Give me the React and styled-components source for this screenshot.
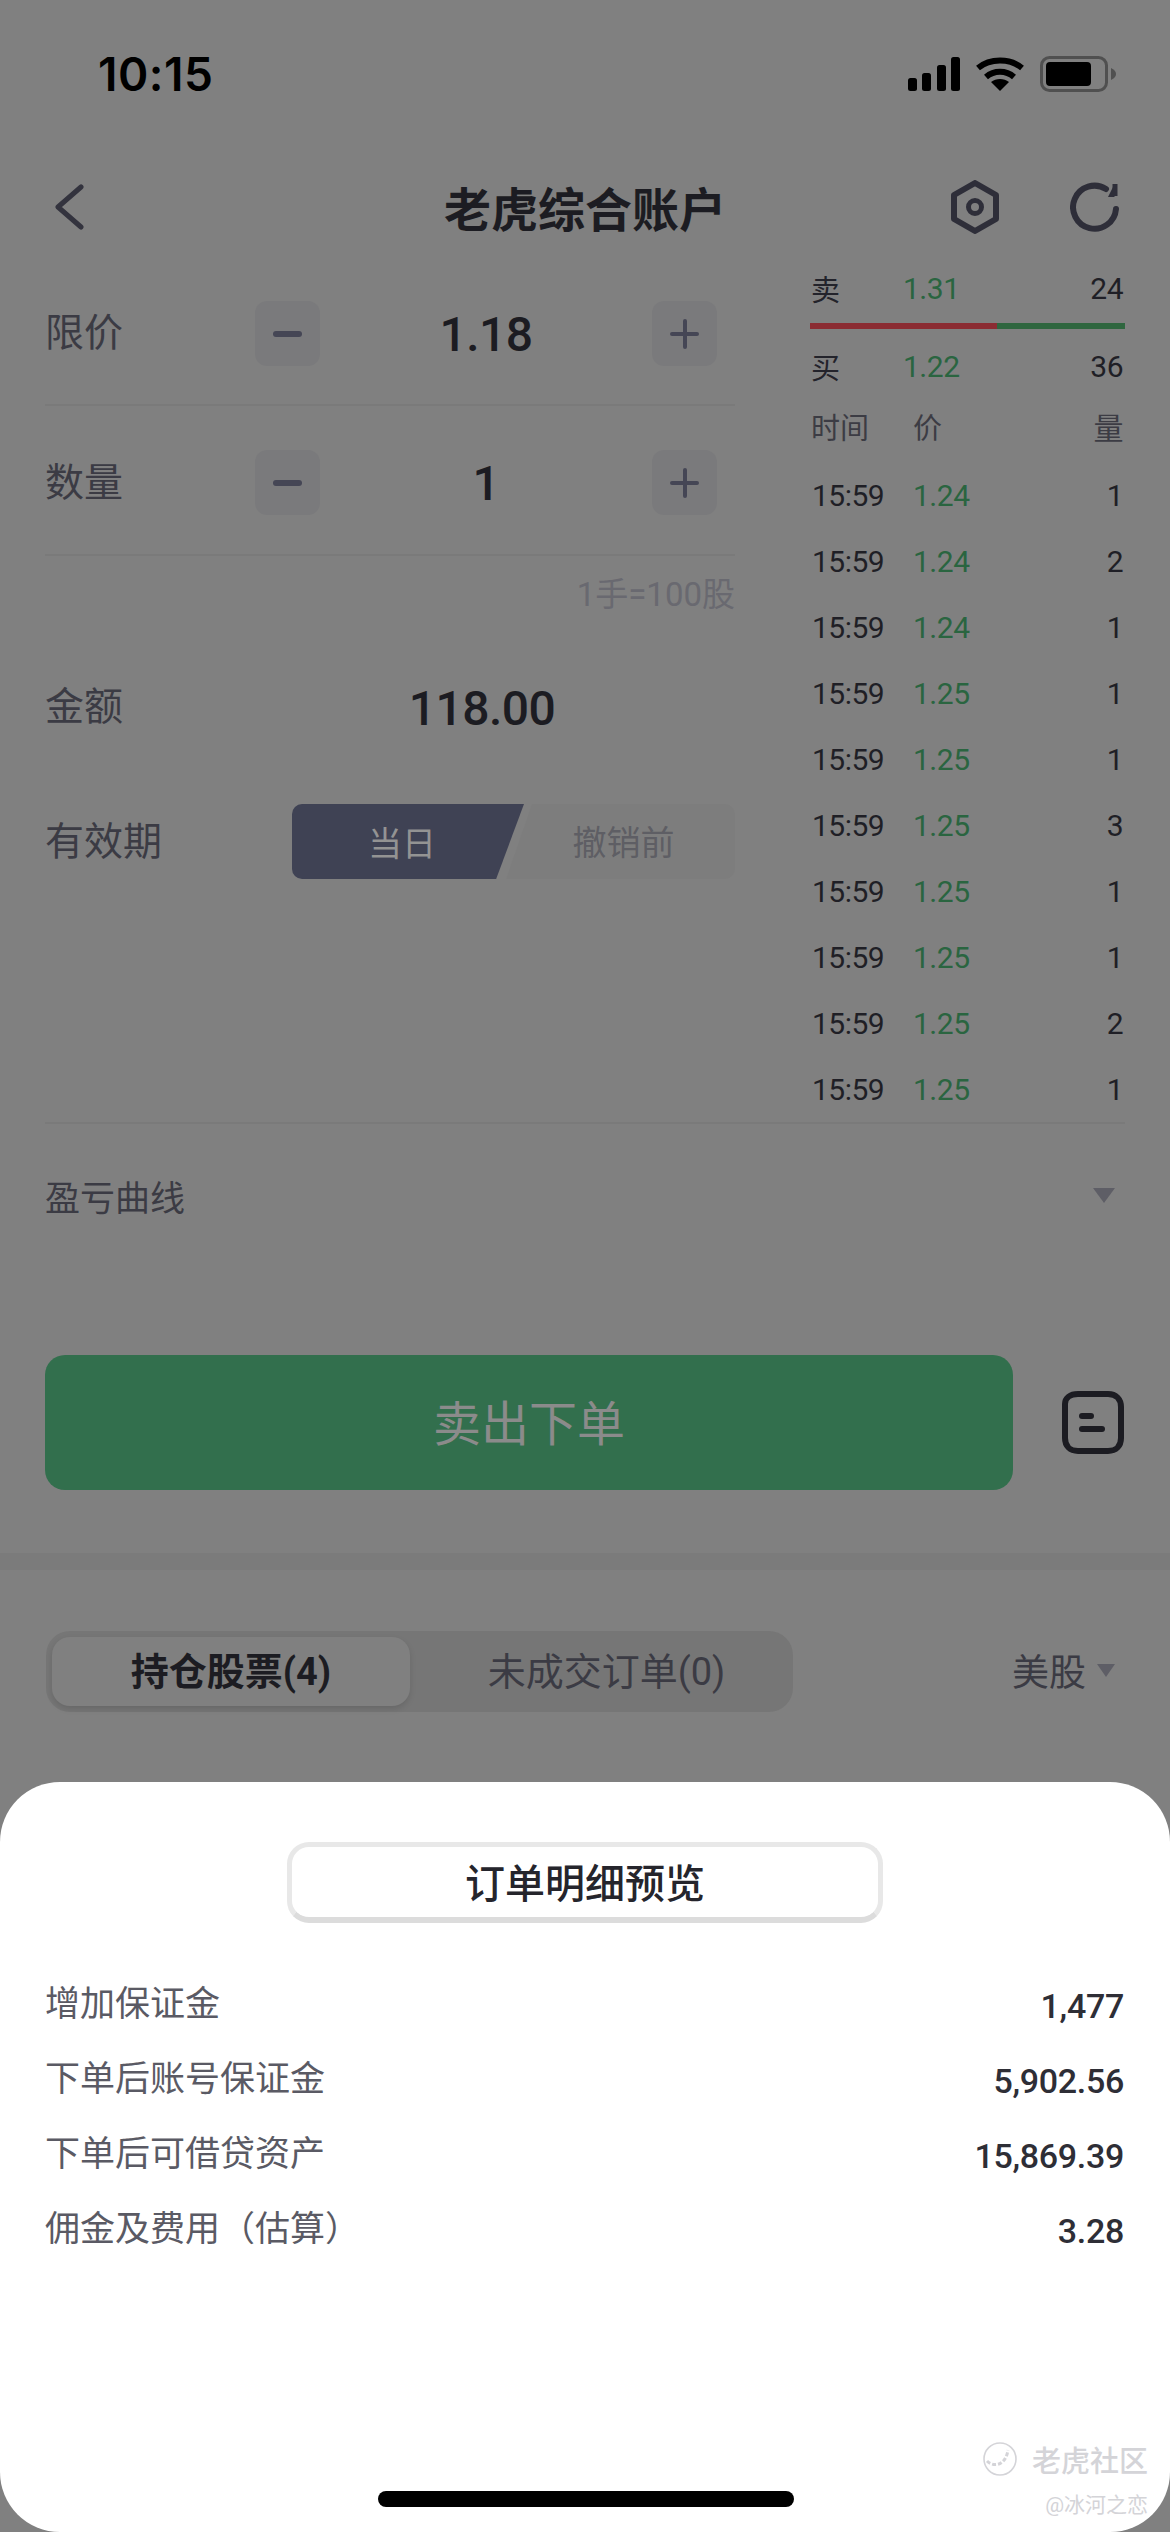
import React from 'react';
import styled, { createGlobalStyle } from 'styled-components';

const trades = [
  ['15:59', '1.24', 1],
  ['15:59', '1.24', 2],
  ['15:59', '1.24', 1],
  ['15:59', '1.25', 1],
  ['15:59', '1.25', 1],
  ['15:59', '1.25', 3],
  ['15:59', '1.25', 1],
  ['15:59', '1.25', 1],
  ['15:59', '1.25', 2],
  ['15:59', '1.25', 1],
];

const details = [
  ['增加保证金', '1,477'],
  ['下单后账号保证金', '5,902.56'],
  ['下单后可借贷资产', '15,869.39'],
  ['佣金及费用（估算）', '3.28'],
];

const SignalIcon = () => (
  <svg width="52" height="34" viewBox="0 0 52 34" fill="#000">
    <rect x="0" y="21" width="9" height="13" rx="2.5" />
    <rect x="14" y="16" width="9" height="18" rx="2.5" />
    <rect x="29" y="8" width="9" height="26" rx="2.5" />
    <rect x="43" y="0" width="9" height="34" rx="2.5" />
  </svg>
);

const WifiIcon = () => (
  <svg width="48" height="34" viewBox="0 0 48 34" fill="none" stroke="#000" strokeWidth="6">
    <path d="M2 11 C14 1 34 1 46 11" />
    <path d="M10 20 C18 13 30 13 38 20" />
    <path d="M24 34 L15 25 C20 21 28 21 33 25 Z" fill="#000" stroke="none" />
  </svg>
);

const BatteryIcon = () => (
  <svg width="76" height="36" viewBox="0 0 76 36">
    <rect x="1.5" y="1.5" width="65" height="33" rx="8" fill="none" stroke="#505050" strokeWidth="3" />
    <rect x="6" y="6" width="45" height="24" rx="4" fill="#000" />
    <path d="M71 12 C75 14 76 16 76 18 C76 20 75 22 71 24 Z" fill="#505050" />
  </svg>
);

const BackIcon = () => (
  <svg width="30" height="46" viewBox="0 0 30 46" fill="none" stroke="#33333e" strokeWidth="5" strokeLinecap="round" strokeLinejoin="round">
    <path d="M27 3 L4 23 L27 43" />
  </svg>
);

const HexIcon = () => (
  <svg width="50" height="54" viewBox="0 0 50 54" fill="none" stroke="#2e2e39" strokeWidth="6" strokeLinejoin="round">
    <path d="M25 3 L46 15 V39 L25 51 L4 39 V15 Z" />
    <circle cx="25" cy="27" r="6.5" strokeWidth="5" />
  </svg>
);

const RefreshIcon = () => (
  <svg width="50" height="50" viewBox="0 0 50 50" fill="none" stroke="#2e2e39" strokeWidth="6" strokeLinecap="round">
    <path d="M46 27 A21.5 21.5 0 1 1 36 7" />
    <path d="M44.5 2 V15 H38 Z" fill="#2e2e39" stroke="none" />
    <path d="M45 2 V14" strokeLinecap="butt" strokeWidth="5" />
  </svg>
);

const ChatIcon = () => (
  <svg width="62" height="64" viewBox="0 0 62 64" fill="none" stroke="#1c1c22" strokeWidth="6" strokeLinecap="round">
    <path d="M16 3 H46 C54 3 59 8 59 16 V47 C59 55 54 60 46 60 H16 C8 60 3 55 3 47 V13 C3 7 8 3 16 3 Z" />
    <path d="M20 25 H29" />
    <path d="M20 38 H40" />
  </svg>
);

const LogoMark = () => (
  <svg width="36" height="36" viewBox="0 0 36 36" fill="none" stroke="#d4d4d8" strokeWidth="1.6">
    <circle cx="18" cy="18" r="16" />
    <path d="M5 20 C12 27 24 24 26 9" strokeWidth="3" strokeDasharray="4 2" />
  </svg>
);

const App = () => {
  return (
    <Page>
      <GlobalStyle />
      <StatusBar>
        <Clock>10:15</Clock>
        <StatusIcons>
          <SignalIcon />
          <WifiIcon />
          <BatteryIcon />
        </StatusIcons>
      </StatusBar>

      <NavBar>
        <BackIcon />
        <NavTitle>老虎综合账户</NavTitle>
        <NavActions>
          <HexIcon />
          <RefreshIcon />
        </NavActions>
      </NavBar>

      <Body>
        <FormColumn>
          <FieldRow $height={140} $bottomPad={4} $line>
            <FieldLabel>限价</FieldLabel>
            <Stepper>
              <MinusButton />
              <FieldValue>1.18</FieldValue>
              <PlusButton />
            </Stepper>
          </FieldRow>
          <FieldRow $height={150} $topPad={5} $line>
            <FieldLabel>数量</FieldLabel>
            <Stepper>
              <MinusButton />
              <FieldValue>1</FieldValue>
              <PlusButton />
            </Stepper>
          </FieldRow>
          <LotNote>1手=100股</LotNote>
          <FieldRow $height={146}>
            <FieldLabel>金额</FieldLabel>
            <Amount>118.00</Amount>
          </FieldRow>
          <ValidityRow>
            <FieldLabel>有效期</FieldLabel>
            <Segment>
              <SegmentActive>当日</SegmentActive>
              <SegmentIdle>撤销前</SegmentIdle>
            </Segment>
          </ValidityRow>
        </FormColumn>

        <QuoteColumn>
          <QuoteRow>
            <QuoteSide>卖</QuoteSide>
            <QuotePrice>1.31</QuotePrice>
            <QuoteSize>24</QuoteSize>
          </QuoteRow>
          <SpreadBar>
            <SpreadPart $color="#8b2c33" $width={187} />
            <SpreadPart $color="#2f663f" $width={128} />
          </SpreadBar>
          <QuoteRow $top={15}>
            <QuoteSide>买</QuoteSide>
            <QuotePrice>1.22</QuotePrice>
            <QuoteSize>36</QuoteSize>
          </QuoteRow>
          <TradeHead>
            <HeadTime>时间</HeadTime>
            <HeadPrice>价</HeadPrice>
            <QuoteSize $muted>量</QuoteSize>
          </TradeHead>
          <TradeList>
            {trades.map((t, i) => (
              <TradeRow key={i}>
                <TradeTime>{t[0]}</TradeTime>
                <TradePrice>{t[1]}</TradePrice>
                <QuoteSize>{t[2]}</QuoteSize>
              </TradeRow>
            ))}
          </TradeList>
        </QuoteColumn>
      </Body>

      <CurveRow>
        <CurveLabel>盈亏曲线</CurveLabel>
        <Caret $size={11} />
      </CurveRow>

      <ActionRow>
        <SubmitButton>卖出下单</SubmitButton>
        <ChatIcon />
      </ActionRow>

      <SectionBand />

      <TabsRow>
        <Tabs>
          <Tab $active>持仓股票(4)</Tab>
          <Tab>未成交订单(0)</Tab>
        </Tabs>
        <Market>
          美股
          <Caret $size={9} />
        </Market>
      </TabsRow>

      <Sheet>
        <SheetTitle>订单明细预览</SheetTitle>
        <DetailList>
          {details.map(([label, value]) => (
            <DetailRow key={label}>
              <DetailLabel>{label}</DetailLabel>
              <DetailValue>{value}</DetailValue>
            </DetailRow>
          ))}
        </DetailList>
        <HomeIndicator />
        <Watermark>
          <WatermarkBrand>
            <LogoMark />
            老虎社区
          </WatermarkBrand>
          <WatermarkUser>@冰河之恋</WatermarkUser>
        </Watermark>
      </Sheet>
    </Page>
  );
};

export default App;

const GlobalStyle = createGlobalStyle`
  html, body {
    margin: 0;
    padding: 0;
    background: #808080;
  }
  * {
    box-sizing: border-box;
  }
`;

const Page = styled.div`
  position: relative;
  width: 1170px;
  height: 2532px;
  overflow: hidden;
  background: #808080;
  font-family: Roboto, "Noto Sans CJK SC", sans-serif;
  color: #1c1c22;
  text-spacing-trim: space-all;
`;

const StatusBar = styled.div`
  display: flex;
  align-items: center;
  justify-content: space-between;
  height: 148px;
  padding: 0 54px 0 98px;
`;

const Clock = styled.div`
  font-family: Inter, sans-serif;
  font-size: 46px;
  font-weight: 600;
  letter-spacing: 0.5px;
  color: #000;
`;

const StatusIcons = styled.div`
  display: flex;
  align-items: center;
  gap: 16px;
`;

const NavBar = styled.div`
  display: flex;
  align-items: center;
  height: 118px;
  padding: 0 50px 0 54px;
`;

const NavTitle = styled.div`
  width: 282px;
  margin-left: 360px;
  padding-bottom: 2px;
  font-size: 47px;
  font-weight: 700;
  white-space: nowrap;
`;

const NavActions = styled.div`
  display: flex;
  align-items: center;
  gap: 70px;
  margin-left: auto;
`;

const Body = styled.div`
  display: flex;
  padding: 0 45px;
`;

const FormColumn = styled.div`
  width: 690px;
`;

const FieldRow = styled.div`
  display: flex;
  align-items: center;
  height: ${(p) => p.$height}px;
  padding-top: ${(p) => p.$topPad || 0}px;
  padding-bottom: ${(p) => p.$bottomPad || 0}px;
  border-bottom: ${(p) => (p.$line ? '2px solid #7a7a7a' : 'none')};
`;

const FieldLabel = styled.div`
  width: 210px;
  flex-shrink: 0;
  font-size: 39px;
  line-height: 50px;
  color: #3b3b44;
`;

const Stepper = styled.div`
  display: flex;
  align-items: center;
  justify-content: space-between;
  flex: 1;
  padding-right: 18px;
`;

const MinusButton = styled.div`
  position: relative;
  width: 65px;
  height: 65px;
  border-radius: 12px;
  background: #7a7a7c;

  &::before {
    content: '';
    position: absolute;
    left: 18px;
    top: 30px;
    width: 29px;
    height: 6px;
    border-radius: 3px;
    background: #454655;
  }
`;

const PlusButton = styled(MinusButton)`
  &::before {
    height: 4px;
    top: 31px;
    border-radius: 2px;
  }

  &::after {
    content: '';
    position: absolute;
    left: 31px;
    top: 18px;
    width: 4px;
    height: 30px;
    border-radius: 2px;
    background: #454655;
  }
`;

const FieldValue = styled.div`
  padding-top: 2px;
  font-size: 48px;
  font-weight: 500;
  letter-spacing: -0.5px;
  color: #1c1c22;
`;

const LotNote = styled.div`
  height: 78px;
  padding-top: 12px;
  font-size: 33px;
  line-height: 54px;
  text-align: right;
  color: #696970;
`;

const Amount = styled.div`
  width: 480px;
  margin-left: -13px;
  padding-top: 2px;
  font-size: 48px;
  font-weight: 500;
  letter-spacing: -0.5px;
  text-align: center;
`;

const ValidityRow = styled.div`
  display: flex;
  align-items: center;
  height: 75px;
  margin-top: 24px;
`;

const Segment = styled.div`
  display: flex;
  flex: 1;
  height: 75px;
  margin-left: 37px;
  font-size: 34px;
`;

const SegmentActive = styled.div`
  display: flex;
  align-items: center;
  justify-content: center;
  width: 232px;
  padding-right: 12px;
  border-radius: 10px 0 0 10px;
  background: #3f4254;
  clip-path: polygon(0 0, 100% 0, 88% 100%, 0 100%);
  color: #939393;
`;

const SegmentIdle = styled.div`
  display: flex;
  align-items: center;
  justify-content: center;
  flex: 1;
  margin-left: -18px;
  padding-left: 6px;
  padding-bottom: 2px;
  border-radius: 0 10px 10px 0;
  background: #7d7d7d;
  clip-path: polygon(26px 0, 100% 0, 100% 100%, 0 100%);
  color: #5e5e64;
`;

const QuoteColumn = styled.div`
  width: 315px;
  margin-left: 75px;
`;

const QuoteRow = styled.div`
  display: flex;
  align-items: center;
  height: 44px;
  margin-top: ${(p) => p.$top || 0}px;
  font-size: 30px;
  letter-spacing: -0.5px;
`;

const QuoteSide = styled.div`
  width: 93px;
  padding-left: 1px;
  font-size: 29px;
  color: #23232b;
`;

const QuotePrice = styled.div`
  color: #2a6540;
`;

const QuoteSize = styled.div`
  margin-left: auto;
  padding-right: 2px;
  font-size: 30px;
  letter-spacing: -0.5px;
  color: ${(p) => (p.$muted ? '#3c3c44' : '#1f1f26')};
`;

const SpreadBar = styled.div`
  display: flex;
  height: 6px;
  margin-top: 13px;
`;

const SpreadPart = styled.div`
  width: ${(p) => p.$width}px;
  background: ${(p) => p.$color};
`;

const TradeHead = styled.div`
  display: flex;
  align-items: center;
  height: 44px;
  margin-top: 16px;
`;

const HeadTime = styled.div`
  width: 103px;
  padding-left: 1px;
  font-size: 29px;
  color: #3c3c44;
`;

const HeadPrice = styled.div`
  font-size: 29px;
  color: #3c3c44;
`;

const TradeList = styled.div`
  margin-top: 14px;
`;

const TradeRow = styled.div`
  display: flex;
  align-items: center;
  height: 66px;
  font-size: 30px;
  letter-spacing: -0.5px;
`;

const TradeTime = styled.div`
  width: 103px;
  padding-left: 2px;
  color: #1f1f26;
`;

const TradePrice = styled.div`
  color: #2a6540;
`;

const CurveRow = styled.div`
  display: flex;
  align-items: center;
  justify-content: space-between;
  height: 148px;
  margin: 0 45px;
  padding-right: 10px;
  padding-bottom: 4px;
  border-top: 2px solid #7a7a7a;
`;

const CurveLabel = styled.div`
  font-size: 35px;
  color: #3b3b44;
`;

const Caret = styled.span`
  width: 0;
  height: 0;
  border-left: ${(p) => p.$size}px solid transparent;
  border-right: ${(p) => p.$size}px solid transparent;
  border-top: ${(p) => p.$size + 4}px solid #5e5e66;
`;

const ActionRow = styled.div`
  display: flex;
  align-items: center;
  justify-content: space-between;
  height: 135px;
  margin-top: 85px;
  padding: 0 46px 0 45px;
`;

const SubmitButton = styled.div`
  display: flex;
  align-items: center;
  justify-content: center;
  width: 968px;
  height: 135px;
  padding-bottom: 6px;
  border-radius: 20px;
  background: #326f4d;
  font-size: 48px;
  color: #8b8b8b;
`;

const SectionBand = styled.div`
  height: 17px;
  margin-top: 63px;
  background: #7b7b7b;
`;

const TabsRow = styled.div`
  display: flex;
  align-items: center;
  justify-content: space-between;
  margin-top: 61px;
  padding: 0 55px 0 46px;
`;

const Tabs = styled.div`
  display: flex;
  width: 747px;
  height: 81px;
  padding: 6px;
  border-radius: 24px;
  background: #767676;
`;

const Tab = styled.div`
  display: flex;
  align-items: center;
  justify-content: center;
  width: ${(p) => (p.$active ? '358px' : 'auto')};
  flex: ${(p) => (p.$active ? 'none' : 1)};
  padding-left: ${(p) => (p.$active ? 0 : 16)}px;
  padding-bottom: 7px;
  border-radius: 18px;
  background: ${(p) => (p.$active ? '#808080' : 'transparent')};
  box-shadow: ${(p) => (p.$active ? '0 3px 6px rgba(0, 0, 0, 0.12)' : 'none')};
  font-size: 38px;
  font-weight: ${(p) => (p.$active ? 700 : 400)};
  color: ${(p) => (p.$active ? '#1c1c22' : '#3b3b44')};
`;

const Market = styled.div`
  display: flex;
  align-items: center;
  gap: 11px;
  padding-bottom: 3px;
  font-size: 37px;
  color: #3b3b44;
`;

const Sheet = styled.div`
  position: absolute;
  left: 0;
  right: 0;
  bottom: 0;
  height: 750px;
  padding: 60px 46px 0 45px;
  border-radius: 60px;
  background: #fff;
`;

const SheetTitle = styled.div`
  display: flex;
  align-items: center;
  justify-content: center;
  width: 596px;
  height: 81px;
  margin-left: 242px;
  padding-bottom: 2px;
  border: 5px solid #e8e8e8;
  border-bottom-width: 6px;
  border-bottom-color: #dcdcdc;
  border-radius: 22px;
  font-size: 40px;
  font-weight: 500;
  color: #25252c;
`;

const DetailList = styled.div`
  margin-top: 42px;
`;

const DetailRow = styled.div`
  display: flex;
  align-items: center;
  justify-content: space-between;
  height: 75px;
`;

const DetailLabel = styled.div`
  padding-bottom: 4px;
  font-size: 35px;
  color: #5a5a64;
`;

const DetailValue = styled.div`
  padding-top: 6px;
  font-size: 34px;
  font-weight: 500;
  letter-spacing: -0.3px;
  color: #2e2e36;
`;

const HomeIndicator = styled.div`
  position: absolute;
  left: 378px;
  bottom: 25px;
  width: 416px;
  height: 16px;
  border-radius: 8px;
  background: #000;
`;

const Watermark = styled.div`
  position: absolute;
  right: 22px;
  bottom: 14px;
  display: flex;
  flex-direction: column;
  align-items: flex-end;
  gap: 8px;
  color: #d4d4d8;
`;

const WatermarkBrand = styled.div`
  display: flex;
  align-items: center;
  gap: 14px;
  font-size: 29px;
  font-weight: 500;
`;

const WatermarkUser = styled.div`
  font-size: 21px;
`;
